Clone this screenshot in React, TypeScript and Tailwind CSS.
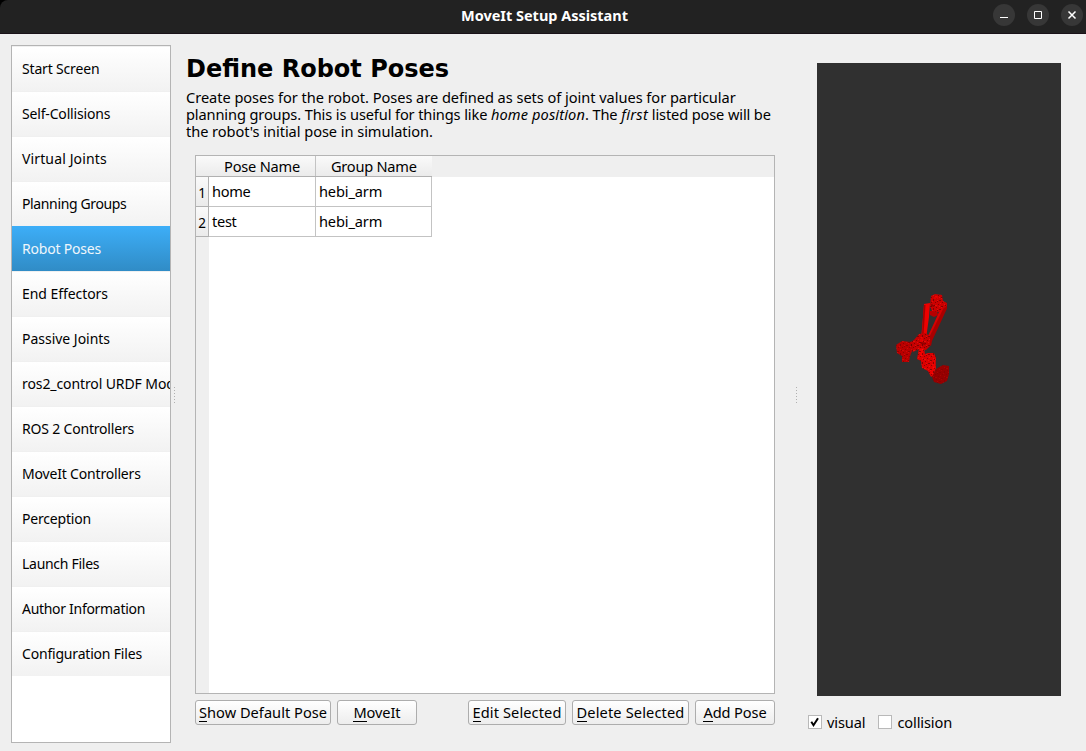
import type { ReactNode } from "react";

const pages = [
  { label: "Start Screen", tracking: "tracking-[-0.17px]" },
  { label: "Self-Collisions", tracking: "tracking-[-0.17px]" },
  { label: "Virtual Joints", tracking: "tracking-[0.13px]" },
  { label: "Planning Groups", tracking: "tracking-[-0.37px]" },
  { label: "Robot Poses", tracking: "tracking-[-0.2px]" },
  { label: "End Effectors", tracking: "tracking-[-0.06px]" },
  { label: "Passive Joints", tracking: "tracking-[-0.02px]" },
  { label: "ros2_control URDF Modifications", tracking: "tracking-[-0.1px]" },
  { label: "ROS 2 Controllers", tracking: "tracking-[-0.19px]" },
  { label: "MoveIt Controllers", tracking: "tracking-[-0.18px]" },
  { label: "Perception", tracking: "tracking-[-0.19px]" },
  { label: "Launch Files", tracking: "tracking-[-0.28px]" },
  { label: "Author Information", tracking: "tracking-[-0.3px]" },
  { label: "Configuration Files", tracking: "tracking-[-0.19px]" },
];

const poses = [
  { name: "home", group: "hebi_arm" },
  { name: "test", group: "hebi_arm" },
];

function TitleBar() {
  return (
    <header className="h-[34px] shrink-0 bg-black">
      <div className="flex h-full items-center rounded-tl-lg border-b border-[#1a1218] bg-[#222222] pr-[3px]">
        <h1 className="flex-1 pb-[3px] pl-[96px] text-center text-[14.5px] leading-5 font-bold tracking-[-0.02px] text-white">
          MoveIt Setup Assistant
        </h1>
        <div className="flex gap-3 pb-[3px]">
          <WindowButton>
            <path d="M7 13.5h8" />
          </WindowButton>
          <WindowButton>
            <path d="M7.5 7.5h7v7h-7z" />
          </WindowButton>
          <WindowButton>
            <path d="M7.5 7.5l7 7M14.5 7.5l-7 7" strokeWidth="1.5" />
          </WindowButton>
        </div>
      </div>
    </header>
  );
}

function WindowButton({ children }: { children: ReactNode }) {
  return (
    <button className="size-[22px] rounded-full bg-[#373737]">
      <svg viewBox="0 0 22 22" className="size-[22px]" fill="none" stroke="#ffffff">
        {children}
      </svg>
    </button>
  );
}

function Sidebar() {
  return (
    <nav className="w-40 shrink-0 overflow-hidden border border-[#b4b4b4] bg-white text-sm">
      {pages.map((page) =>
        page.label === "Robot Poses" ? (
          <div
            key={page.label}
            className={`flex h-[45px] items-center bg-linear-to-b from-[#3daef8] to-[#308cc6] pl-[10px] whitespace-nowrap text-[#eff6fb] ${page.tracking}`}
          >
            {page.label}
          </div>
        ) : (
          <div
            key={page.label}
            className={`flex h-[45px] items-center border-t border-[#f0f0f0] bg-linear-to-b from-white to-[#f2f2f2] pl-[10px] whitespace-nowrap ${page.tracking}`}
          >
            {page.label}
          </div>
        ),
      )}
    </nav>
  );
}

function SplitterHandle() {
  return (
    <div className="flex h-[17px] w-px flex-col gap-[2px] self-start">
      {[0, 1, 2, 3, 4, 5].map((dot) => (
        <i key={dot} className="size-px shrink-0 bg-[#b0b0b0]" />
      ))}
    </div>
  );
}

function PoseTable() {
  return (
    <div className="ml-[9px] flex h-[539px] w-[580px] flex-col border border-[#b4b4b4] bg-white">
      <div className="flex h-[21px] shrink-0 bg-[#efefef] leading-[20px]">
        <div className="flex w-[236px] border-b border-[#b1b1b1] bg-linear-to-b from-[#fafafa] to-[#ebebeb]">
          <div className="w-[120px] border-r border-[#c3c3c3] pl-[28px] tracking-[-0.2px]">Pose Name</div>
          <div className="flex-1 pl-[15px] tracking-[-0.25px]">Group Name</div>
        </div>
      </div>
      <div className="flex flex-1">
        <div className="w-[13px] bg-[#efefef]">
          {poses.map((pose, index) => (
            <div
              key={pose.name}
              className="flex h-[30px] items-center justify-center border-r border-b border-[#b1b1b1] bg-linear-to-b from-[#fafafa] to-[#ebebeb] pt-[3px] text-[13.5px]"
            >
              {index + 1}
            </div>
          ))}
        </div>
        <div>
          {poses.map((pose) => (
            <div key={pose.name} className="flex h-[30px] border-b border-[#c3c3c3] leading-[29px]">
              <div className="w-[107px] border-r border-[#c3c3c3] pl-[3px] tracking-[-0.3px]">{pose.name}</div>
              <div className="w-[116px] border-r border-[#c3c3c3] pl-[3px] tracking-[-0.15px]">{pose.group}</div>
            </div>
          ))}
        </div>
      </div>
    </div>
  );
}

function PushButton({ label, className }: { label: string; className: string }) {
  return (
    <button
      className={`flex h-[25px] items-center justify-center rounded-[3px] border border-[#adadad] bg-linear-to-b from-white to-[#ededed] pt-px whitespace-nowrap ${className}`}
    >
      <span className="border-b border-black leading-[17px]">{label[0]}</span>
      <span className="border-b border-transparent leading-[17px] whitespace-pre">{label.slice(1)}</span>
    </button>
  );
}

function RobotArm() {
  return (
    <svg viewBox="0 0 90 120" className="h-[120px] w-[90px]">
      <defs>
        <pattern id="grain" width="11" height="9" patternUnits="userSpaceOnUse">
          <path
            d="M1 0h1v1H1zM4 2h2v1H4zM9 1h1v2H9zM0 4h1v1H0zM7 4h1v1H7zM3 6h1v1H3zM10 7h1v1h-1zM6 8h2v1H6zM2 3h1v1H2z"
            fill="#500404"
            opacity=".6"
          />
          <path
            d="M6 0h1v1H6zM2 2h1v1H2zM8 3h1v1H8zM5 5h1v1H5zM0 7h2v1H0zM9 6h1v1H9zM4 8h1v1H4z"
            fill="#ff2018"
            opacity=".45"
          />
        </pattern>
      </defs>
      <path d="M44 24l6-1-1 14-3 22h-5l2-22z" fill="#ee0000" />
      <path d="M44 25h1.5l-2 30H42l1-18z" fill="#a60000" />
      <path d="M50 31h7l1 4-4 2-4-2z" fill="#b60000" />
      <path d="M62 23l5 .5v5L52 61l-1 5-5-3 5-9z" fill="#a90000" />
      <path d="M62 26l2 1-15 31-1-2z" fill="#d80000" />
      <path d="M51 16l4-2 7 1 1 6 4 2-1 4-4 2-3 3-7-1-2-5z" fill="#cb0000" />
      <path d="M34 60l5-6 6-1 5 3v10l-4 4-7-1-6 3-3-7-1-2z" fill="#c60000" />
      <path d="M16 65l6-4 9 1 2 7-3 7-1 6h-7v-6l-5-3z" fill="#b90000" />
      <path d="M39 68h5l1 6 3-1h6l2 5-1 10-1 7-3 2-3-6-6-3-1-7-4-2z" fill="#db0000" />
      <path d="M56 89l7-4 6 1v8l-2 7-6 3-7-2-2-5z" fill="#960000" />
      <path d="M55 78l1 10-4 8-2-3 3-8z" fill="#ed0000" />
      <path d="M40 69h3v7h-3z" fill="#f20000" />
      <g fill="url(#grain)">
        <path d="M51 16l4-2 7 1 1 6 4 2-1 4-4 2-3 3-7-1-2-5z" />
        <path d="M34 60l5-6 6-1 5 3v10l-4 4-7-1-6 3-3-7-1-2z" />
        <path d="M16 65l6-4 9 1 2 7-3 7-1 6h-7v-6l-5-3z" opacity=".7" />
        <path d="M39 68h5l1 6 3-1h6l2 5-1 10-1 7-3 2-3-6-6-3-1-7-4-2z" />
        <path d="M56 89l7-4 6 1v8l-2 7-6 3-7-2-2-5z" opacity=".35" />
      </g>
      <path d="M41 62l5 1-1 2-4-1zM51 24l4 1-1 2-3-1z" fill="#7d0000" opacity=".7" />
      <path d="M40 57h3v5h-3zM54 16h4v3h-4z" fill="#f00000" opacity=".6" />
    </svg>
  );
}

function CheckBox({ label, checked }: { label: string; checked?: boolean }) {
  return (
    <label className="flex items-center gap-[5px]">
      <span className="size-[14px] border border-[#b9b9b9] bg-white">
        {checked && (
          <svg viewBox="0 0 12 12" className="size-3" fill="none" stroke="#000000" strokeWidth="2">
            <path d="M2.3 5.8l2.2 3.4L9 2.3" />
          </svg>
        )}
      </span>
      <span className="leading-5 tracking-[-0.12px]">{label}</span>
    </label>
  );
}

export default function App() {
  return (
    <div className="flex h-[751px] w-[1086px] flex-col overflow-hidden bg-[#efefef] font-['Noto_Sans','Open_Sans',sans-serif] text-[14.6px] text-black">
      <TitleBar />
      <main className="flex flex-1 pt-[11px] pb-2 pl-[11px]">
        <Sidebar />
        <div className="w-[15px] pt-[342px] pl-[3px]">
          <SplitterHandle />
        </div>
        <section className="w-[609px] pt-[9px]">
          <h2 className="h-[31px] font-['DejaVu_Sans',sans-serif] text-2xl leading-[31px] font-bold whitespace-nowrap">
            Define Robot Poses
          </h2>
          <div className="mt-1 h-[51px] leading-[17px] whitespace-nowrap">
            <p className="tracking-[-0.04px]">
              Create poses for the robot. Poses are defined as sets of joint values for particular
            </p>
            <p className="tracking-[-0.12px]">
              planning groups. This is useful for things like <em className="tracking-[0.12px]">home position</em>. The{" "}
              <em className="tracking-[0.3px]">first</em> listed pose will be
            </p>
            <p className="tracking-[-0.05px]">the robot&apos;s initial pose in simulation.</p>
          </div>
          <div className="h-[15px]" />
          <PoseTable />
          <div className="mt-[6px] ml-[9px] flex w-[580px] gap-[6px]">
            <PushButton label="Show Default Pose" className="w-[136px] tracking-[0.02px]" />
            <PushButton label="MoveIt" className="w-[80px] tracking-[-0.1px]" />
            <div className="flex-1" />
            <PushButton label="Edit Selected" className="w-[98px] tracking-[0.1px]" />
            <PushButton label="Delete Selected" className="w-[117px] tracking-[0.13px]" />
            <PushButton label="Add Pose" className="w-[80px] tracking-[-0.12px]" />
          </div>
        </section>
        <div className="w-[13px] pt-[342px] pl-px">
          <SplitterHandle />
        </div>
        <aside className="pt-[18px]">
          <div className="ml-[9px] h-[633px] w-[244px] bg-[#303030] pt-[217px] pl-[63px]">
            <RobotArm />
          </div>
          <div className="mt-4 flex gap-[13px]">
            <CheckBox label="visual" checked />
            <CheckBox label="collision" />
          </div>
        </aside>
      </main>
    </div>
  );
}
